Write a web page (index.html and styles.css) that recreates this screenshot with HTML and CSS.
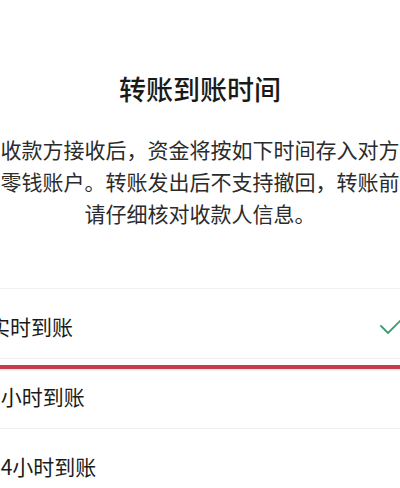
FILE: index.html
```html
<!DOCTYPE html>
<html lang="zh-CN">
<head>
  <meta charset="UTF-8">
  <title>转账到账时间</title>
  <meta name="viewport" content="width=device-width, initial-scale=1.0">
  <link rel="stylesheet" href="styles.css">
</head>
<body>
  <div class="sheet">
    <h1 class="title">转账到账时间</h1>
    <p class="desc">收款方接收后，资金将按如下时间存入对方<br>零钱账户。转账发出后不支持撤回，转账前<br>请仔细核对收款人信息。</p>

    <div class="options">
      <div class="option">
        <span>实时到账</span>
        <svg class="check" width="24" height="18" viewBox="0 0 24 18">
          <path d="M1 9 L8 16 L23 1" fill="none" stroke="#3f9c70" stroke-width="1.8" stroke-linecap="round" stroke-linejoin="round"/>
        </svg>
      </div>
      <div class="option"><span>2小时到账</span></div>
      <div class="option"><span>24小时到账</span></div>
      <div class="mark"></div>
    </div>
  </div>
</body>
</html>
```

FILE: styles.css
```css
* {
  box-sizing: border-box;
}

body {
  margin: 0;
  background: #ffffff;
  font-family: "Noto Sans CJK SC", "Noto Sans", sans-serif;
  color: #1a1a1a;
  overflow: hidden;
}

.sheet {
  margin: 0 -27px;
}

.title {
  margin: 70px 0 0;
  height: 38px;
  line-height: 38px;
  font-size: 27px;
  font-weight: 500;
  text-align: center;
}

.desc {
  margin: 25px 0 0;
  font-size: 21px;
  line-height: 32px;
  color: #2b2b2b;
  text-align: center;
}

.options {
  position: relative;
  margin-top: 59px;
  border-top: 1px solid #efefef;
}

.option {
  height: 70px;
  padding: 5px 16px 0;
  display: flex;
  align-items: center;
  justify-content: space-between;
  border-bottom: 1px solid #efefef;
  font-size: 21px;
}

.check {
  margin-right: 7px;
}

/* red underline drawn over the screenshot */
.mark {
  position: absolute;
  left: 0;
  right: 0;
  top: 76px;
  height: 4px;
  background: #c53d4c;
  box-shadow: 0 1px 2px rgba(220, 90, 100, 0.25);
}
```
